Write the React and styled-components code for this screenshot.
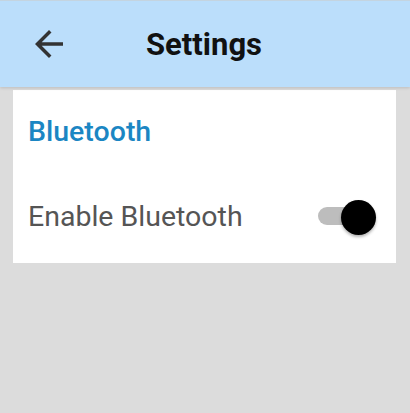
import React, { useState } from "react";
import styled, { createGlobalStyle } from "styled-components";

const GlobalStyle = createGlobalStyle`
  html, body {
    margin: 0;
    padding: 0;
    background: #dcdcdc;
    font-family: Roboto, "Liberation Sans", sans-serif;
  }
`;

const Screen = styled.div`
  width: 410px;
  height: 413px;
  background: #dcdcdc;
  display: flex;
  flex-direction: column;
  overflow: hidden;
`;

const Header = styled.header`
  height: 87px;
  flex-shrink: 0;
  background: #bbdefb;
  border-top: 1px solid #c4d4e0;
  box-sizing: border-box;
  box-shadow: 0 1px 3px rgba(0, 0, 0, 0.15);
  display: flex;
  align-items: center;
  padding-left: 28px;
  position: relative;
  z-index: 1;
`;

const BackButton = styled.button`
  width: 42px;
  height: 42px;
  padding: 0;
  border: none;
  background: transparent;
  display: flex;
  align-items: center;
  justify-content: center;
  cursor: pointer;
  color: #333;
`;

const Title = styled.h1`
  margin: 0 0 0 76px;
  font-size: 31px;
  font-weight: 700;
  color: #111;
`;

const Card = styled.section`
  margin: 3px 14px 0 13px;
  height: 173px;
  background: #fff;
  box-sizing: border-box;
  padding: 0 20px 0 15px;
  display: flex;
  flex-direction: column;
`;

const SectionTitle = styled.h2`
  margin: 0;
  height: 82px;
  display: flex;
  align-items: center;
  font-size: 28.5px;
  font-weight: 500;
  color: #1b86c3;
`;

const Row = styled.div`
  height: 88px;
  display: flex;
  align-items: center;
  justify-content: space-between;
`;

const Label = styled.span`
  font-size: 28.5px;
  color: #555;
`;

const Track = styled.button`
  position: relative;
  width: 50px;
  height: 18px;
  margin-right: 8px;
  border-radius: 9px;
  border: none;
  padding: 0;
  background: ${(p) => (p.on ? "#bdbdbd" : "#d6d6d6")};
  cursor: pointer;
`;

const Thumb = styled.span`
  position: absolute;
  top: 50%;
  left: ${(p) => (p.on ? "23px" : "-8px")};
  width: 35px;
  height: 35px;
  margin-top: -16px;
  border-radius: 50%;
  background: ${(p) => (p.on ? "#000" : "#f5f5f5")};
  box-shadow: 0 2px 3px rgba(0, 0, 0, 0.3);
`;

export default function App() {
  const [enabled, setEnabled] = useState(true);

  return (
    <Screen>
      <GlobalStyle />
      <Header>
        <BackButton aria-label="back">
          <svg width="42" height="42" viewBox="0 0 24 24" fill="currentColor">
            <path d="M20 11H7.83l5.59-5.59L12 4l-8 8 8 8 1.41-1.41L7.83 13H20v-2z" />
          </svg>
        </BackButton>
        <Title>Settings</Title>
      </Header>
      <Card>
        <SectionTitle>Bluetooth</SectionTitle>
        <Row>
          <Label>Enable Bluetooth</Label>
          <Track on={enabled} onClick={() => setEnabled(!enabled)}>
            <Thumb on={enabled} />
          </Track>
        </Row>
      </Card>
    </Screen>
  );
}
